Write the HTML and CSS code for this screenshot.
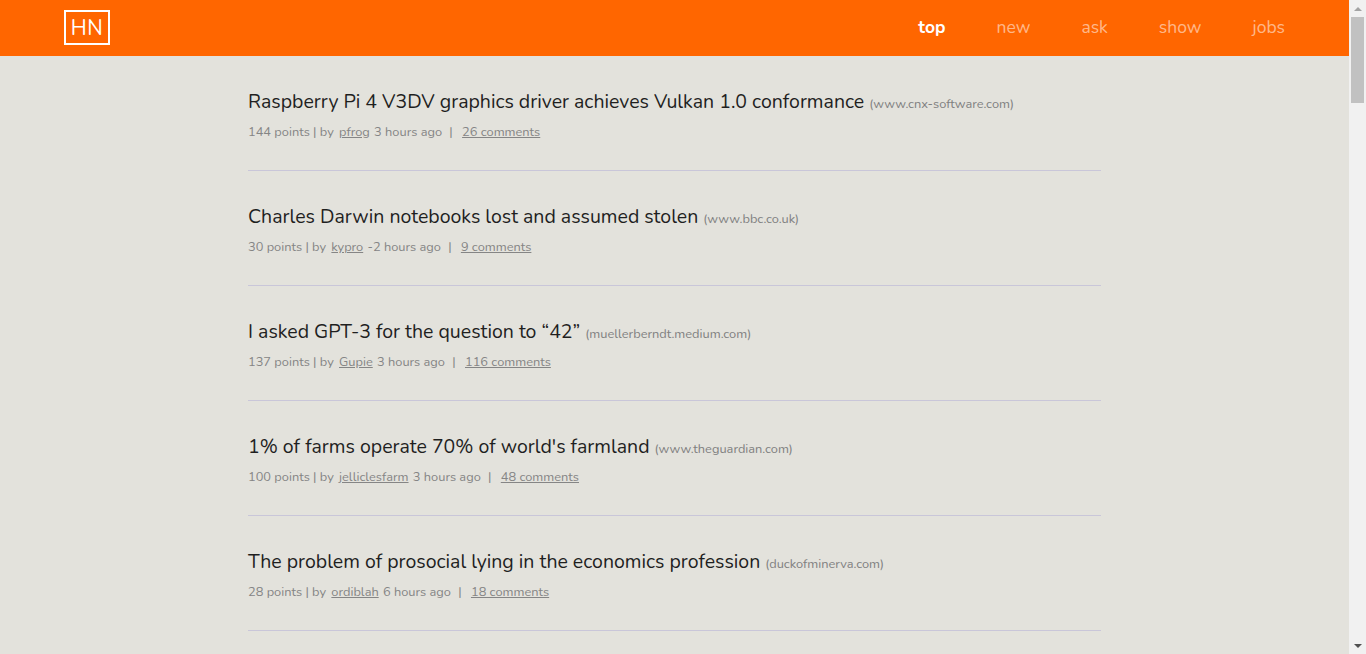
FILE: index.html
```html
<!DOCTYPE html>
<html lang="en">
<head>
<meta charset="utf-8">
<title>Hacker News</title>
<link rel="stylesheet" href="styles.css">
</head>
<body>
<div class="page">
<header class="header">
  <div class="header-inner">
    <a class="logo" href="#">HN</a>
    <nav class="nav">
      <a class="nav-link active" href="#">top</a>
      <a class="nav-link" href="#">new</a>
      <a class="nav-link" href="#">ask</a>
      <a class="nav-link" href="#">show</a>
      <a class="nav-link" href="#">jobs</a>
    </nav>
  </div>
</header>
<main class="list">
  <article class="item">
    <h2 class="title"><a href="#">Raspberry Pi 4 V3DV graphics driver achieves Vulkan 1.0 conformance</a> <span class="domain">(www.cnx-software.com)</span></h2>
    <p class="meta">144 points | by <a href="#">pfrog</a> 3 hours ago <span class="sep">|</span> <a href="#">26 comments</a></p>
  </article>
  <article class="item">
    <h2 class="title"><a href="#">Charles Darwin notebooks lost and assumed stolen</a> <span class="domain">(www.bbc.co.uk)</span></h2>
    <p class="meta">30 points | by <a href="#">kypro</a> -2 hours ago <span class="sep">|</span> <a href="#">9 comments</a></p>
  </article>
  <article class="item">
    <h2 class="title"><a href="#">I asked GPT-3 for the question to “42”</a> <span class="domain">(muellerberndt.medium.com)</span></h2>
    <p class="meta">137 points | by <a href="#">Gupie</a> 3 hours ago <span class="sep">|</span> <a href="#">116 comments</a></p>
  </article>
  <article class="item">
    <h2 class="title"><a href="#">1% of farms operate 70% of world's farmland</a> <span class="domain">(www.theguardian.com)</span></h2>
    <p class="meta">100 points | by <a href="#">jelliclesfarm</a> 3 hours ago <span class="sep">|</span> <a href="#">48 comments</a></p>
  </article>
  <article class="item">
    <h2 class="title"><a href="#">The problem of prosocial lying in the economics profession</a> <span class="domain">(duckofminerva.com)</span></h2>
    <p class="meta">28 points | by <a href="#">ordiblah</a> 6 hours ago <span class="sep">|</span> <a href="#">18 comments</a></p>
  </article>
  <article class="item">
    <h2 class="title"><a href="#">Show HN: A tiny static site generator written in Go</a> <span class="domain">(github.com)</span></h2>
    <p class="meta">64 points | by <a href="#">jdoe</a> 4 hours ago <span class="sep">|</span> <a href="#">21 comments</a></p>
  </article>
</main>
</div>
<div class="scrollbar" aria-hidden="true">
  <div class="sb-btn"><span class="arrow-up"></span></div>
  <div class="sb-track"><div class="sb-thumb"></div></div>
  <div class="sb-btn"><span class="arrow-down"></span></div>
</div>
</body>
</html>
```
FILE: styles.css
```css
* { box-sizing: border-box; }
html, body { margin: 0; padding: 0; }
body {
  display: flex;
  height: 100vh;
  overflow: hidden;
  background: #e3e2dc;
  font-family: "Nunito", "Open Sans", "Noto Sans", sans-serif;
  color: #1f1f1f;
}
a { color: inherit; text-decoration: none; }

.page {
  flex: 1;
  min-width: 0;
  overflow: hidden;
}

.header {
  background: #ff6600;
  height: 56px;
}
.header-inner {
  display: flex;
  align-items: center;
  justify-content: space-between;
  height: 100%;
  padding: 0 64px;
}
.logo {
  display: flex;
  align-items: center;
  justify-content: center;
  width: 46px;
  height: 35px;
  margin-top: -1px;
  border: 2px solid #ffffff;
  color: #ffffff;
  font-size: 21px;
  letter-spacing: 0.5px;
}
.nav {
  display: flex;
  gap: 51px;
  padding-bottom: 2px;
}
.nav-link {
  color: rgba(255, 255, 255, 0.55);
  font-size: 17.5px;
}
.nav-link.active {
  color: #ffffff;
  font-weight: 700;
}

.list {
  width: 853px;
  margin: 0 auto;
}
.item {
  padding: 34px 0 29px;
  border-bottom: 1px solid #c9c6d9;
}
.title {
  margin: 0;
  font-size: 19.5px;
  font-weight: 400;
  line-height: 24px;
}
.domain {
  font-size: 12.8px;
  color: #808080;
}
.meta {
  margin: 7px 0 0;
  font-size: 12.8px;
  line-height: 18px;
  color: #858585;
}
.meta a {
  text-decoration: underline;
  margin: 0 1px 0 2px;
}
.sep { margin: 0 4px 0 4px; }

.scrollbar {
  flex: 0 0 17px;
  display: flex;
  flex-direction: column;
  background: #f1f1f1;
}
.sb-btn {
  height: 17px;
  display: flex;
  align-items: center;
  justify-content: center;
}
.arrow-up {
  width: 0; height: 0;
  border-left: 4px solid transparent;
  border-right: 4px solid transparent;
  border-bottom: 4px solid #a3a3a3;
}
.arrow-down {
  width: 0; height: 0;
  border-left: 4px solid transparent;
  border-right: 4px solid transparent;
  border-top: 4px solid #505050;
}
.sb-track {
  flex: 1;
  padding: 0 2px;
}
.sb-thumb {
  height: 86px;
  background: #c1c1c1;
}
```
